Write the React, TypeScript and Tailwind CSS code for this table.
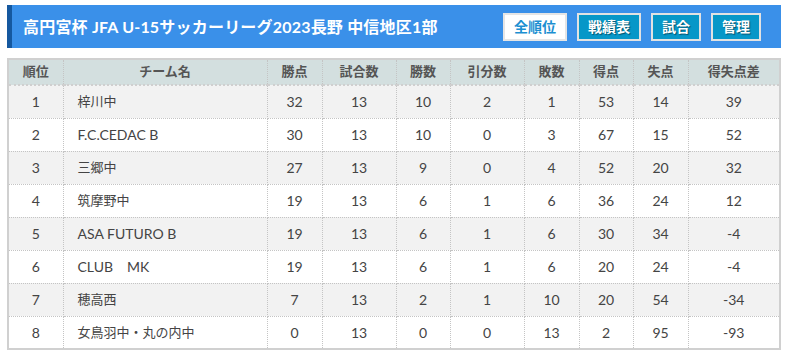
const COLS = [
  { label: "順位", w: "w-[55px]" },
  { label: "チーム名", w: "w-[204px]" },
  { label: "勝点", w: "w-[55px]" },
  { label: "試合数", w: "w-[74px]" },
  { label: "勝数", w: "w-[54px]" },
  { label: "引分数", w: "w-[74px]" },
  { label: "敗数", w: "w-[55px]" },
  { label: "得点", w: "w-[54px]" },
  { label: "失点", w: "w-[55px]" },
  { label: "得失点差", w: "" },
];

const ROWS: (string | number)[][] = [
  [1, "梓川中", 32, 13, 10, 2, 1, 53, 14, 39],
  [2, "F.C.CEDAC B", 30, 13, 10, 0, 3, 67, 15, 52],
  [3, "三郷中", 27, 13, 9, 0, 4, 52, 20, 32],
  [4, "筑摩野中", 19, 13, 6, 1, 6, 36, 24, 12],
  [5, "ASA FUTURO B", 19, 13, 6, 1, 6, 30, 34, -4],
  [6, "CLUB　MK", 19, 13, 6, 1, 6, 20, 24, -4],
  [7, "穂高西", 7, 13, 2, 1, 10, 20, 54, -34],
  [8, "女鳥羽中・丸の内中", 0, 13, 0, 0, 13, 2, 95, -93],
];

const BUTTONS = [
  { label: "全順位", active: true },
  { label: "戦績表", active: false },
  { label: "試合", active: false },
  { label: "管理", active: false },
];

// kanji / kana names render a touch narrower in the original
const isJa = (v: string | number) => typeof v === "string" && /[\u3040-\u9fff]/.test(v);

export default function App() {
  return (
    <div
      className="w-[793px] h-[358px] bg-white pt-[5px] px-[7px] text-[#444]"
      style={{ fontFamily: "Lato, 'Noto Sans CJK JP', sans-serif" }}
    >
      {/* Title bar */}
      <div className="flex h-[43px] w-[774px] items-center bg-[#3a90e9] border-l-[5px] border-[#15589f] pl-[11px] pr-[20px]">
        <h1 className="flex-1 text-[16px] font-bold text-white tracking-[0.2px]">
          高円宮杯 JFA U-15サッカーリーグ2023長野 中信地区1部
        </h1>
        <div className="flex gap-[10px]">
          {BUTTONS.map((b) => (
            <button
              key={b.label}
              className={`h-[28px] border-2 px-[9px] text-[14px] font-bold leading-none ${
                b.active
                  ? "bg-white border-[#e5e5e5] text-[#1c8fd1]"
                  : "bg-[#0797c8] border-[#e2e2e2] text-white [text-shadow:1px_1px_1px_rgba(0,0,0,0.45)]"
              }`}
            >
              {b.label}
            </button>
          ))}
        </div>
      </div>

      {/* Standings table */}
      <table className="mt-[10px] w-[774px] border-collapse border-2 border-[#d0d0d0] text-[14px]">
        <thead>
          <tr className="h-[26px] bg-[#d3dfdf]">
            {COLS.map((c) => (
              <th
                key={c.label}
                className={`${c.w} border-x border-dotted border-[#c4c4c4] border-b-2 border-b-solid border-b-[#cfcfcf] text-[13px] font-bold text-[#555] text-center p-0`}
              >
                {c.label}
              </th>
            ))}
          </tr>
        </thead>
        <tbody>
          {ROWS.map((r, i) => (
            <tr key={i} className={`h-[33px] ${i % 2 === 0 ? "bg-[#f2f2f2]" : "bg-white"}`}>
              {r.map((v, j) => (
                <td
                  key={j}
                  className={`border border-dotted border-[#c4c4c4] p-0 ${
                    j === 1 ? "text-left pl-[14px]" : "text-center"
                  } ${isJa(v) ? "text-[13px]" : ""}`}
                >
                  {v}
                </td>
              ))}
            </tr>
          ))}
        </tbody>
      </table>
    </div>
  );
}
